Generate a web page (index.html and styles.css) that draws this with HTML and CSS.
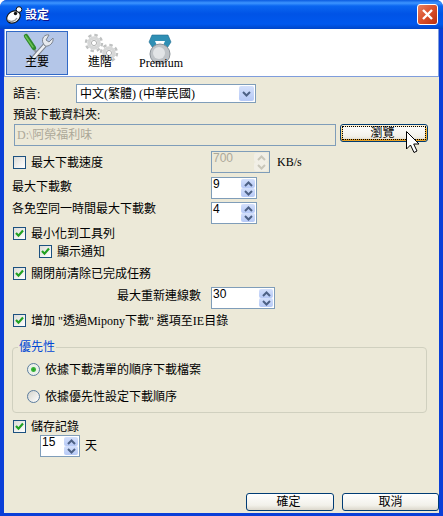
FILE: index.html
```html
<!DOCTYPE html>
<html lang="zh-Hant">
<head>
    <meta charset="UTF-8">
    <meta name="viewport" content="width=device-width, initial-scale=1.0">
    <title>設定</title>
    <link rel="stylesheet" href="styles.css">
</head>
<body>
    <svg class="defs" width="0" height="0">
        <symbol id="chev-up" viewBox="0 0 9 6"><path d="M1 5 L4.5 1.5 L8 5" fill="none" stroke="currentColor" stroke-width="2"/></symbol>
        <symbol id="chev-down" viewBox="0 0 9 6"><path d="M1 1 L4.5 4.5 L8 1" fill="none" stroke="currentColor" stroke-width="2"/></symbol>
        <symbol id="tick" viewBox="0 0 13 13"><path d="M3 6 L5.5 8.7 L10 3.6" fill="none" stroke="#21a121" stroke-width="2.2"/></symbol>
    </svg>

    <div class="window">
        <div class="titlebar">
            <svg class="app-icon" width="17" height="18" viewBox="0 0 17 18">
                <ellipse cx="7.5" cy="11" rx="7.2" ry="5.6" transform="rotate(-35 7.5 11)" fill="#fff" stroke="#111" stroke-width="1.1"/>
                <circle cx="13" cy="3.5" r="2.8" fill="#fff" stroke="#111"/>
                <path d="M2 14 C4 16.5 9 15.5 11 12" fill="none" stroke="#999" stroke-width="1.5"/>
                <circle cx="9.5" cy="7.5" r="1.7" fill="#111"/>
            </svg>
            <span class="title-text">設定</span>
            <div class="close-btn">
                <svg width="13" height="13" viewBox="0 0 13 13"><path d="M2 2 L11 11 M11 2 L2 11" stroke="#fff" stroke-width="2.4"/></svg>
            </div>
        </div>

        <div class="frame">
            <div class="toolbar">
                <div class="tab tab-active">
                    <svg class="tab-icon" width="32" height="30" viewBox="0 0 32 30">
                        <path d="M13 16 L23 30" stroke="#8f96a0" stroke-width="2.2"/>
                        <path d="M5 3 L13 15" stroke="#2f8a2c" stroke-width="4.4" stroke-linecap="round"/>
                        <path d="M4.5 3 L12 14" stroke="#6cc254" stroke-width="1.4" stroke-linecap="round"/>
                        <path d="M7 31 L24 12" stroke="#7c8490" stroke-width="4.6"/>
                        <path d="M7 31 L24 12" stroke="#eef0f4" stroke-width="2.6"/>
                        <path d="M32 5 L28 9 L25 7 L28 2 C24 1 20 5 22 10 L24 13 C28 14 33 10 32 5 Z" fill="#e6e9ee" stroke="#7c8490"/>
                    </svg>
                    <span class="tab-label">主要</span>
                </div>
                <div class="tab">
                    <svg class="tab-icon" width="34" height="30" viewBox="0 0 34 30">
                        <circle cx="11" cy="10" r="8" fill="none" stroke="#c0c2c2" stroke-width="2.4" stroke-dasharray="3.4 2.9"/>
                        <circle cx="11" cy="10" r="5" fill="none" stroke="#d6d7d7" stroke-width="3.6"/>
                        <circle cx="11" cy="10" r="2.6" fill="none" stroke="#9a9c9c" stroke-width="0.8"/>
                        <circle cx="26" cy="20" r="8" fill="none" stroke="#c0c2c2" stroke-width="2.4" stroke-dasharray="3.4 2.9"/>
                        <circle cx="26" cy="20" r="5" fill="none" stroke="#d6d7d7" stroke-width="3.6"/>
                        <circle cx="26" cy="20" r="2.6" fill="none" stroke="#9a9c9c" stroke-width="0.8"/>
                    </svg>
                    <span class="tab-label">進階</span>
                </div>
                <div class="tab tab-premium">
                    <svg class="tab-icon" width="28" height="30" viewBox="0 0 28 30">
                        <path d="M5 2 H21 L24 9 L17 20 H9 L2 9 Z" fill="#2f8fb4" stroke="#1f6c90" stroke-width="0.6"/>
                        <path d="M8 8 H18 L15 15 H11 Z" fill="#fff"/>
                        <circle cx="13" cy="21" r="10" fill="#bfc3c7" stroke="#8c9298"/>
                        <circle cx="12" cy="20" r="6" fill="#e2e4e6"/>
                    </svg>
                    <span class="tab-label tab-label-latin">Premium</span>
                </div>
            </div>

            <div class="form">
                <div class="row row-lang">
                    <span class="lang-label">語言:</span>
                    <div class="select">
                        <span class="select-text">中文(繁體) (中華民國)</span>
                        <div class="select-arrow"><svg width="9" height="6"><use href="#chev-down"/></svg></div>
                    </div>
                </div>

                <div class="row row-text folder-label">預設下載資料夾:</div>
                <div class="row row-folder">
                    <div class="path-input">D:\阿榮福利味</div>
                    <div class="btn btn-focus"><span class="btn-inner">瀏覽</span></div>
                </div>

                <div class="row row-speed">
                    <div class="check-wrap">
                        <span class="check"></span>
                        <span>最大下載速度</span>
                    </div>
                    <div class="spinner spinner-disabled spinner-60">
                        <span class="spin-value">700</span>
                        <div class="spin-btns">
                            <div class="spin-btn"><svg width="9" height="6"><use href="#chev-up"/></svg></div>
                            <div class="spin-btn"><svg width="9" height="6"><use href="#chev-down"/></svg></div>
                        </div>
                    </div>
                    <span class="unit unit-kb">KB/s</span>
                </div>

                <div class="row row-max">
                    <span class="num-label">最大下載數</span>
                    <div class="spinner">
                        <span class="spin-value">9</span>
                        <div class="spin-btns">
                            <div class="spin-btn"><svg width="9" height="6"><use href="#chev-up"/></svg></div>
                            <div class="spin-btn"><svg width="9" height="6"><use href="#chev-down"/></svg></div>
                        </div>
                    </div>
                </div>

                <div class="row row-each">
                    <span class="num-label">各免空同一時間最大下載數</span>
                    <div class="spinner">
                        <span class="spin-value">4</span>
                        <div class="spin-btns">
                            <div class="spin-btn"><svg width="9" height="6"><use href="#chev-up"/></svg></div>
                            <div class="spin-btn"><svg width="9" height="6"><use href="#chev-down"/></svg></div>
                        </div>
                    </div>
                </div>

                <div class="row row-text row-min">
                    <span class="check"><svg width="13" height="13"><use href="#tick"/></svg></span>
                    <span>最小化到工具列</span>
                </div>
                <div class="row row-text row-notify">
                    <span class="check"><svg width="13" height="13"><use href="#tick"/></svg></span>
                    <span>顯示通知</span>
                </div>
                <div class="row row-text row-close">
                    <span class="check"><svg width="13" height="13"><use href="#tick"/></svg></span>
                    <span>關閉前清除已完成任務</span>
                </div>

                <div class="row row-retry">
                    <span class="retry-label">最大重新連線數</span>
                    <div class="spinner spinner-64">
                        <span class="spin-value">30</span>
                        <div class="spin-btns">
                            <div class="spin-btn"><svg width="9" height="6"><use href="#chev-up"/></svg></div>
                            <div class="spin-btn"><svg width="9" height="6"><use href="#chev-down"/></svg></div>
                        </div>
                    </div>
                </div>

                <div class="row row-text row-ie">
                    <span class="check"><svg width="13" height="13"><use href="#tick"/></svg></span>
                    <span>增加 "透過Mipony下載" 選項至IE目錄</span>
                </div>

                <div class="group">
                    <div class="group-title">優先性</div>
                    <div class="row row-text row-radio1">
                        <span class="radio radio-on"></span>
                        <span>依據下載清單的順序下載檔案</span>
                    </div>
                    <div class="row row-text row-radio2">
                        <span class="radio"></span>
                        <span>依據優先性設定下載順序</span>
                    </div>
                </div>

                <div class="row row-text row-save">
                    <span class="check"><svg width="13" height="13"><use href="#tick"/></svg></span>
                    <span>儲存記錄</span>
                </div>
                <div class="row row-days">
                    <div class="spinner spinner-40">
                        <span class="spin-value">15</span>
                        <div class="spin-btns">
                            <div class="spin-btn"><svg width="9" height="6"><use href="#chev-up"/></svg></div>
                            <div class="spin-btn"><svg width="9" height="6"><use href="#chev-down"/></svg></div>
                        </div>
                    </div>
                    <span class="unit">天</span>
                </div>

                <div class="footer">
                    <div class="btn btn-ok">確定</div>
                    <div class="btn btn-cancel">取消</div>
                </div>
            </div>
        </div>

        <!-- mouse pointer sits over the browse button -->
        <svg class="pointer" width="14" height="23" viewBox="0 0 14 23">
            <path d="M0.5 0.5 V18 L4.5 14 L8 21.5 L11 20 L7.7 13 H13 Z" fill="#fff" stroke="#000"/>
        </svg>
    </div>
</body>
</html>
```

FILE: styles.css
```css
* {
    box-sizing: border-box;
}
body {
    margin: 0;
    padding: 0;
    background-color: #fff;
    font-family: "Liberation Serif", "Noto Sans CJK TC", serif;
    font-size: 12px;
    line-height: 14px;
    color: #000;
}
.defs {
    position: absolute;
}
.window {
    position: relative;
    display: flex;
    flex-direction: column;
    width: 443px;
    height: 516px;
    padding: 0 4px 3px;
    background-color: #0a3fd8;
    border-radius: 7px 7px 0 0;
    overflow: hidden;
}

/* title bar */
.titlebar {
    display: flex;
    align-items: center;
    flex: 0 0 29px;
    margin: 0 -4px;
    padding: 0 5px 0 6px;
    background-image: linear-gradient(to bottom, #0a5be0 0, #3d95ff 3px, #0a66f0 6px, #0053e6 14px, #0058ee 24px, #0046c8 29px);
}
.app-icon {
    flex: none;
}
.title-text {
    margin-left: 2px;
    font-weight: bold;
    color: #fff;
    text-shadow: 1px 1px #0f1089;
}
.close-btn {
    display: flex;
    align-items: center;
    justify-content: center;
    width: 21px;
    height: 21px;
    margin-left: auto;
    border: 1px solid #fff;
    border-radius: 3px;
    background-image: linear-gradient(to bottom right, #e9805f, #d9502c 50%, #b9300f);
}

.frame {
    display: flex;
    flex-direction: column;
    flex: 1;
    background-color: #ece9d8;
}

/* toolbar */
.toolbar {
    display: flex;
    gap: 1px;
    flex: 0 0 48px;
    padding: 2px 1px 0;
    background-color: #fff;
    border: 1px solid #7f9ddc;
    border-width: 0 1px 1px;
}
.tab {
    display: flex;
    flex-direction: column;
    align-items: center;
    width: 62px;
    height: 44px;
    padding-top: 1px;
    border: 1px solid transparent;
}
.tab-active {
    background-color: #b4c6e8;
    border-color: #3169c6;
}
.tab-premium {
    margin-left: -2px;
}
.tab-icon {
    flex: none;
    overflow: visible;
}
.tab-label {
    margin-top: -8px;
}
.tab-label-latin {
    margin-top: -7px;
}

/* form rows */
.form {
    display: flex;
    flex-direction: column;
    flex: 1;
    padding: 7px 0 2px 8px;
}
.row {
    display: flex;
    align-items: center;
    height: 22px;
}
.row-text {
    height: 14px;
}
.row-lang {
    height: 19px;
}
.lang-label {
    width: 63px;
    margin-left: 1px;
}
.select {
    display: flex;
    align-items: center;
    width: 180px;
    height: 19px;
    background-color: #fff;
    border: 1px solid #7f9db9;
}
.select-text {
    padding-left: 3px;
}
.select-arrow {
    display: flex;
    align-items: center;
    justify-content: center;
    width: 15px;
    height: 15px;
    margin-left: auto;
    margin-right: 1px;
    color: #4d6185;
    background-image: linear-gradient(to bottom, #d4e0fb, #b6c9f6);
    border-radius: 2px;
}
.folder-label {
    margin-top: 5px;
    margin-left: 1px;
}
.row-folder {
    align-items: flex-start;
    margin-top: 2px;
}
.path-input {
    width: 322px;
    height: 22px;
    margin-left: 2px;
    padding: 3px 0 0 2px;
    color: #aca899;
    border: 1px solid #7f9db9;
}

/* buttons */
.btn {
    display: flex;
    align-items: center;
    justify-content: center;
    height: 18px;
    border: 1px solid #003c74;
    border-radius: 3px;
    background-image: linear-gradient(to bottom, #fff, #f2f1ea 70%, #dcd8cc);
}
.btn-focus {
    width: 88px;
    margin-left: 4px;
    box-shadow: inset 0 2px 0 #fff0cf, inset 0 -2px 0 #e5a025, inset 2px 0 0 #fbd88a, inset -2px 0 0 #f5b940;
}
.btn-inner {
    display: flex;
    align-items: center;
    justify-content: center;
    width: 84px;
    height: 14px;
    padding-right: 3px;
    border: 1px dotted #000;
}
.footer {
    display: flex;
    gap: 8px;
    margin-top: auto;
    margin-left: 234px;
}
.btn-ok {
    width: 88px;
    padding-right: 3px;
}
.btn-cancel {
    width: 97px;
}

/* checks */
.check-wrap {
    display: flex;
    align-items: center;
    width: 199px;
}
.check {
    flex: none;
    display: block;
    width: 13px;
    height: 13px;
    margin-left: 1px;
    margin-right: 5px;
    background-image: linear-gradient(to bottom right, #dcdcd7, #fff);
    border: 1px solid #1c5180;
}
.check svg {
    display: block;
    margin: -1px;
}
.check + span,
.radio + span {
    padding-top: 2px;
}
.radio {
    flex: none;
    width: 13px;
    height: 13px;
    margin-right: 5px;
    border: 1px solid #5b7c9e;
    border-radius: 50%;
    background-image: linear-gradient(to bottom right, #d4d4cc, #fff);
}
.radio-on {
    background: radial-gradient(circle, #21a121 0, #3cb43c 2px, #e8f0e8 3px, #f4f4ee 100%);
}

/* spinners */
.spinner {
    display: flex;
    align-items: center;
    width: 46px;
    height: 22px;
    padding: 1px;
    background-color: #fff;
    border: 1px solid #7f9db9;
}
.spinner-40 {
    width: 40px;
}
.spinner-60 {
    width: 59px;
}
.spinner-64 {
    width: 64px;
}
.spin-value {
    align-self: flex-start;
    margin-top: -2px;
    font-family: "Liberation Sans", sans-serif;
}
.spin-btns {
    display: flex;
    flex-direction: column;
    width: 14px;
    height: 18px;
    margin-left: auto;
}
.spin-btn {
    display: flex;
    align-items: center;
    justify-content: center;
    flex: 1;
    color: #4d6185;
    background-image: linear-gradient(to bottom, #d4e0fb, #b6c9f6);
    border-radius: 2px;
}
.spin-btn svg {
    display: block;
}
.spinner-disabled {
    background-color: #ece9d8;
}
.spinner-disabled .spin-value {
    color: #aca899;
}
.spinner-disabled .spin-btn {
    color: #c9c7ba;
    background-image: none;
    background-color: #f1efe6;
}
.unit {
    margin-left: 5px;
}
.unit-kb {
    margin-left: 7px;
}

.row-speed {
    margin-top: 5px;
}
.row-max {
    margin-top: 4px;
}
.row-max .num-label {
    margin-top: -2px;
}
.row-each {
    margin-top: 3px;
}
.row-each .num-label {
    margin-top: -8px;
}
.num-label {
    width: 199px;
}
.row-min {
    margin-top: 2px;
}
.row-notify {
    margin-top: 4px;
    margin-left: 26px;
}
.row-close {
    margin-top: 8px;
}
.row-retry {
    margin-top: 7px;
}
.retry-label {
    width: 199px;
    margin-top: -5px;
    padding-right: 10px;
    text-align: right;
}
.row-ie {
    margin-top: 4px;
}

/* priority group */
.group {
    width: 415px;
    height: 66px;
    margin-top: 20px;
    padding-left: 14px;
    border: 1px solid #d0d0bf;
    border-radius: 4px;
}
.group-title {
    width: fit-content;
    margin: -8px 0 0 -9px;
    padding: 0 1px;
    color: #0046d5;
    background-color: #ece9d8;
}
.row-radio1 {
    margin-top: 8px;
}
.row-radio2 {
    margin-top: 13px;
}
.row-save {
    margin-top: 6px;
}
.row-days {
    margin-top: 2px;
    margin-left: 28px;
}

.pointer {
    position: absolute;
    left: 406px;
    top: 131px;
}
```
